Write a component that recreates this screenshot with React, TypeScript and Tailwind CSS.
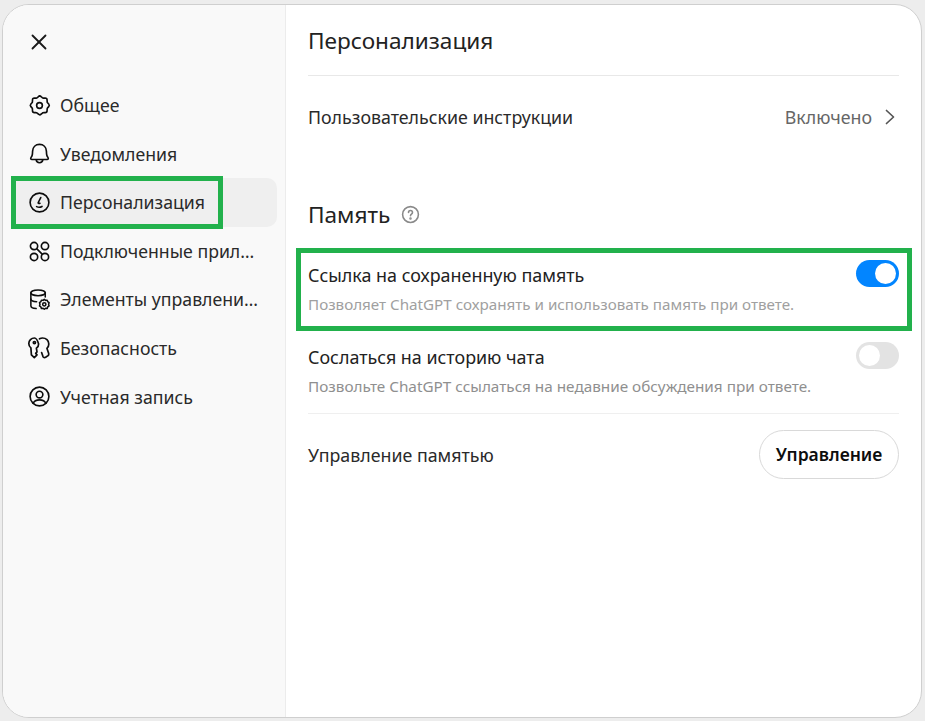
import { X } from "lucide-react";

const FONT = "font-['Noto_Sans','Liberation_Sans',sans-serif]";

const GearIcon = () => (
  <svg viewBox="0 0 24 24" className="w-[23px] h-[23px]" fill="none" stroke="currentColor" strokeWidth="1.7" strokeLinejoin="round">
    <path d="M12 1.900c.7 0 1.200.3 1.700.8l1.300 1.200c.3.3.7.4 1.100.4l1.800-.1c1.300 0 2 .7 2 1.900l.1 1.900c0 .4.1.8.4 1.100l1.200 1.300c.8.9.8 1.900 0 2.800l-1.200 1.300c-.3.3-.4.7-.4 1.100l-.1 1.800c0 1.300-.7 2-1.900 2l-1.900.1c-.4 0-.8.1-1.100.4l-1.300 1.200c-.9.8-1.900.8-2.800 0l-1.300-1.200c-.3-.3-.7-.4-1.100-.4l-1.800-.1c-1.300 0-2-.7-2-1.900l-.1-1.900c0-.4-.1-.8-.4-1.100l-1.200-1.300c-.8-.9-.8-1.900 0-2.800l1.200-1.300c.3-.3.4-.7.4-1.100l.1-1.800c0-1.300.7-2 1.900-2l1.900.1c.4 0 .8-.1 1.100-.4l1.300-1.200c.4-.5.9-.8 1.500-.8z" />
    <circle cx="12" cy="12" r="3" />
  </svg>
);

const BellIcon = () => (
  <svg viewBox="0 0 24 24" className="w-[23px] h-[23px]" fill="none" stroke="currentColor" strokeWidth="1.7" strokeLinecap="round" strokeLinejoin="round">
    <path d="M12 2.500c-4.200 0-7 3-7.200 7l-.2 3.200c-.1 1.500-.7 2.500-1.500 3.600-.6.9-.2 2 1 2h15.800c1.200 0 1.600-1.100 1-2-.8-1.100-1.400-2.100-1.500-3.600l-.2-3.200c-.2-4-3-7-7.200-7z" />
    <path d="M8.500 18.500c.3 2 1.700 3.200 3.500 3.200s3.200-1.200 3.500-3.200" />
  </svg>
);

const ClockSmileIcon = () => (
  <svg viewBox="0 0 24 24" className="w-[23px] h-[23px]" fill="none" stroke="currentColor" strokeWidth="1.7" strokeLinecap="round" strokeLinejoin="round">
    <circle cx="12" cy="12" r="9.800" />
    <path d="M13.300 6.800 10.700 12c-.2.500 0 .9.500.9h1.300" />
    <path d="M9 16.300c1.800.8 3.800.8 5.600-.2" />
  </svg>
);

const AppsIcon = () => (
  <svg viewBox="0 0 24 24" className="w-[23px] h-[23px]" fill="none" stroke="currentColor" strokeWidth="1.7">
    <circle cx="6.300" cy="6.300" r="3.800" />
    <circle cx="17.700" cy="6.300" r="3.800" />
    <circle cx="6.300" cy="17.700" r="3.800" />
    <circle cx="17.700" cy="17.700" r="3.800" />
    <path d="m9 9 6 6" />
  </svg>
);

const DataIcon = () => (
  <svg viewBox="0 0 24 24" className="w-[23px] h-[23px]" fill="none" stroke="currentColor" strokeWidth="1.6" strokeLinecap="round" strokeLinejoin="round">
    <ellipse cx="10.500" cy="5" rx="7.500" ry="3" />
    <path d="M3 5v13.500c0 1.700 2 2.700 5.500 3" />
    <path d="M18 5v4.500" />
    <path d="M3 11.500c0 1.500 2.500 2.700 6 2.900" />
    <circle cx="17" cy="17" r="1.700" />
    <path d="M17 11.800l1.300 1.100 1.700-.2.600 1.600 1.400 1-.5 1.700.5 1.700-1.400 1-.6 1.600-1.700-.2-1.300 1.100-1.300-1.100-1.700.2-.6-1.600-1.400-1 .5-1.700-.5-1.700 1.400-1 .6-1.600 1.700.2z" />
  </svg>
);

const KeysIcon = () => (
  <svg viewBox="0 0 24 24" className="w-[24px] h-[24px]" fill="none" stroke="currentColor" strokeWidth="1.7" strokeLinecap="round" strokeLinejoin="round">
    <path d="M7.500 2C4.300 2 1.800 4.500 1.800 7.600c0 1.800.8 3.300 2.100 4.300l.5 7 2.900 2.800 2.700-2.800-1.300-1.500 1.300-1.500-.6-3.600c1.400-1 2.200-2.600 2.200-4.400C10.600 4.500 9.800 2 7.500 2z" />
    <path d="M12.500 2.800c1-.5 2-.8 3.100-.8 3.400 0 6.200 2.600 6.200 5.900 0 1.800-.7 3.300-1.900 4.400l1.800 5.300c.3 1-.1 1.800-1 2.300l-2.100 1.400c-1.100.6-2.200.2-2.700-1l-1.300-3.800" />
    <circle cx="7.400" cy="6.600" r="1.100" />
  </svg>
);

const UserIcon = () => (
  <svg viewBox="0 0 24 24" className="w-[23px] h-[23px]" fill="none" stroke="currentColor" strokeWidth="1.7" strokeLinecap="round">
    <circle cx="12" cy="12" r="9.800" />
    <circle cx="12" cy="10" r="3.500" />
    <path d="M5.500 19c1-2.500 3.500-3.500 6.500-3.500s5.500 1 6.500 3.500" />
  </svg>
);

const NAV = [
  { label: "Общее", icon: <GearIcon /> },
  { label: "Уведомления", icon: <BellIcon /> },
  { label: "Персонализация", icon: <ClockSmileIcon />, active: true },
  { label: "Подключенные приложения", icon: <AppsIcon /> },
  { label: "Элементы управления данными", icon: <DataIcon /> },
  { label: "Безопасность", icon: <KeysIcon /> },
  { label: "Учетная запись", icon: <UserIcon /> },
];

const Toggle = ({ on }: { on?: boolean }) => (
  <div className={`w-[43px] h-[27px] rounded-full flex items-center p-[3px] ${on ? "bg-[#0285ff] justify-end" : "bg-[#e3e3e3] justify-start"}`}>
    <div className="w-[21px] h-[21px] rounded-full bg-white" />
  </div>
);

export default function App() {
  return (
    <div className={`${FONT} relative w-[925px] h-[721px] overflow-hidden bg-[#ededed] pt-[4px] pl-[2px] pr-[3px] pb-[3px]`}>
      <div className="flex h-full rounded-[27px] border border-[#cfcfcf] bg-white overflow-hidden">
        <aside className="w-[283px] shrink-0 bg-[#f9f9f9] border-r border-[#ececec] pl-[9px] pr-[8px]">
          <div className="h-[76px] pl-[14px] pt-[24px] text-[#1a1a1a]">
            <X className="w-[26px] h-[26px]" strokeWidth={1.7} />
          </div>
          <nav className="flex flex-col">
            {NAV.map((item) => (
              <div
                key={item.label}
                className={`h-[48.6px] flex items-center gap-[9px] pl-[15px] pr-[13px] rounded-[10px] text-[#0d0d0d] ${item.active ? "bg-[#efefef]" : ""}`}
              >
                <span className="shrink-0 w-[24px] flex justify-center">{item.icon}</span>
                <span className="truncate text-[17.7px] text-[#2a2a2a]">{item.label}</span>
              </div>
            ))}
          </nav>
        </aside>

        <main className="flex-1 pl-[22px] pr-[22px]">
          <h1 className="h-[71px] border-b border-[#e8e8e8] pt-[18px] text-[22.6px] leading-[36px] text-[#222]">
            Персонализация
          </h1>
          <div className="h-[83px] flex items-center justify-between pb-[1px] text-[17.8px] text-[#2a2a2a]">
            <span>Пользовательские инструкции</span>
            <span className="flex items-center gap-[13px] pr-[4px] text-[#666]">
              Включено
              <svg viewBox="0 0 10 16" className="w-[10px] h-[16px] text-[#555]" fill="none" stroke="currentColor" strokeWidth="1.7" strokeLinecap="round" strokeLinejoin="round">
                <path d="m1.500 1.500 7 6.500-7 6.500" />
              </svg>
            </span>
          </div>
          <div className="h-[92px] pt-[38px] flex items-start gap-[11px]">
            <h2 className="text-[22.6px] leading-[36px] text-[#222]">Память</h2>
            <svg viewBox="0 0 24 24" className="w-[19px] h-[19px] mt-[8px] text-[#8a8a8a]" fill="none" stroke="currentColor" strokeWidth="2" strokeLinecap="round">
              <circle cx="12" cy="12" r="10" />
              <path d="M9.500 9.500c0-1.500 1.100-2.500 2.500-2.500s2.500 1 2.500 2.400c0 2.100-2.500 2-2.500 4.100" />
              <circle cx="12" cy="17" r=".6" fill="currentColor" />
            </svg>
          </div>

          <div className="h-[91px] pt-[9px] flex justify-between">
            <div>
              <div className="mt-[2px] text-[17.9px] leading-[26px] text-[#222]">Ссылка на сохраненную память</div>
              <div className="mt-[6px] text-[15.2px] leading-[20px] text-[#a0a0a0]">
                Позволяет ChatGPT сохранять и использовать память при ответе.
              </div>
            </div>
            <Toggle on />
          </div>

          <div className="h-[72px] border-b border-[#efefef] flex justify-between">
            <div>
              <div className="mt-[2px] text-[17.9px] leading-[26px] text-[#222]">Сослаться на историю чата</div>
              <div className="mt-[6px] text-[15.3px] leading-[20px] text-[#8f8f8f]">
                Позвольте ChatGPT ссылаться на недавние обсуждения при ответе.
              </div>
            </div>
            <Toggle />
          </div>

          <div className="h-[82px] flex items-center justify-between">
            <span className="text-[17.8px] text-[#2a2a2a]">Управление памятью</span>
            <button className="h-[49px] w-[140px] mb-[2px] rounded-full border border-[#d9d9d9] bg-white text-[17.5px] font-semibold text-[#0d0d0d]">
              Управление
            </button>
          </div>
        </main>
      </div>

      {/* green annotation frames drawn over the screenshot */}
      <div className="absolute left-[11px] top-[176px] w-[212px] h-[53px] border-[5px] border-[#22b14c]" />
      <div className="absolute left-[296px] top-[248px] w-[616px] h-[83px] border-[5px] border-[#22b14c]" />
    </div>
  );
}
